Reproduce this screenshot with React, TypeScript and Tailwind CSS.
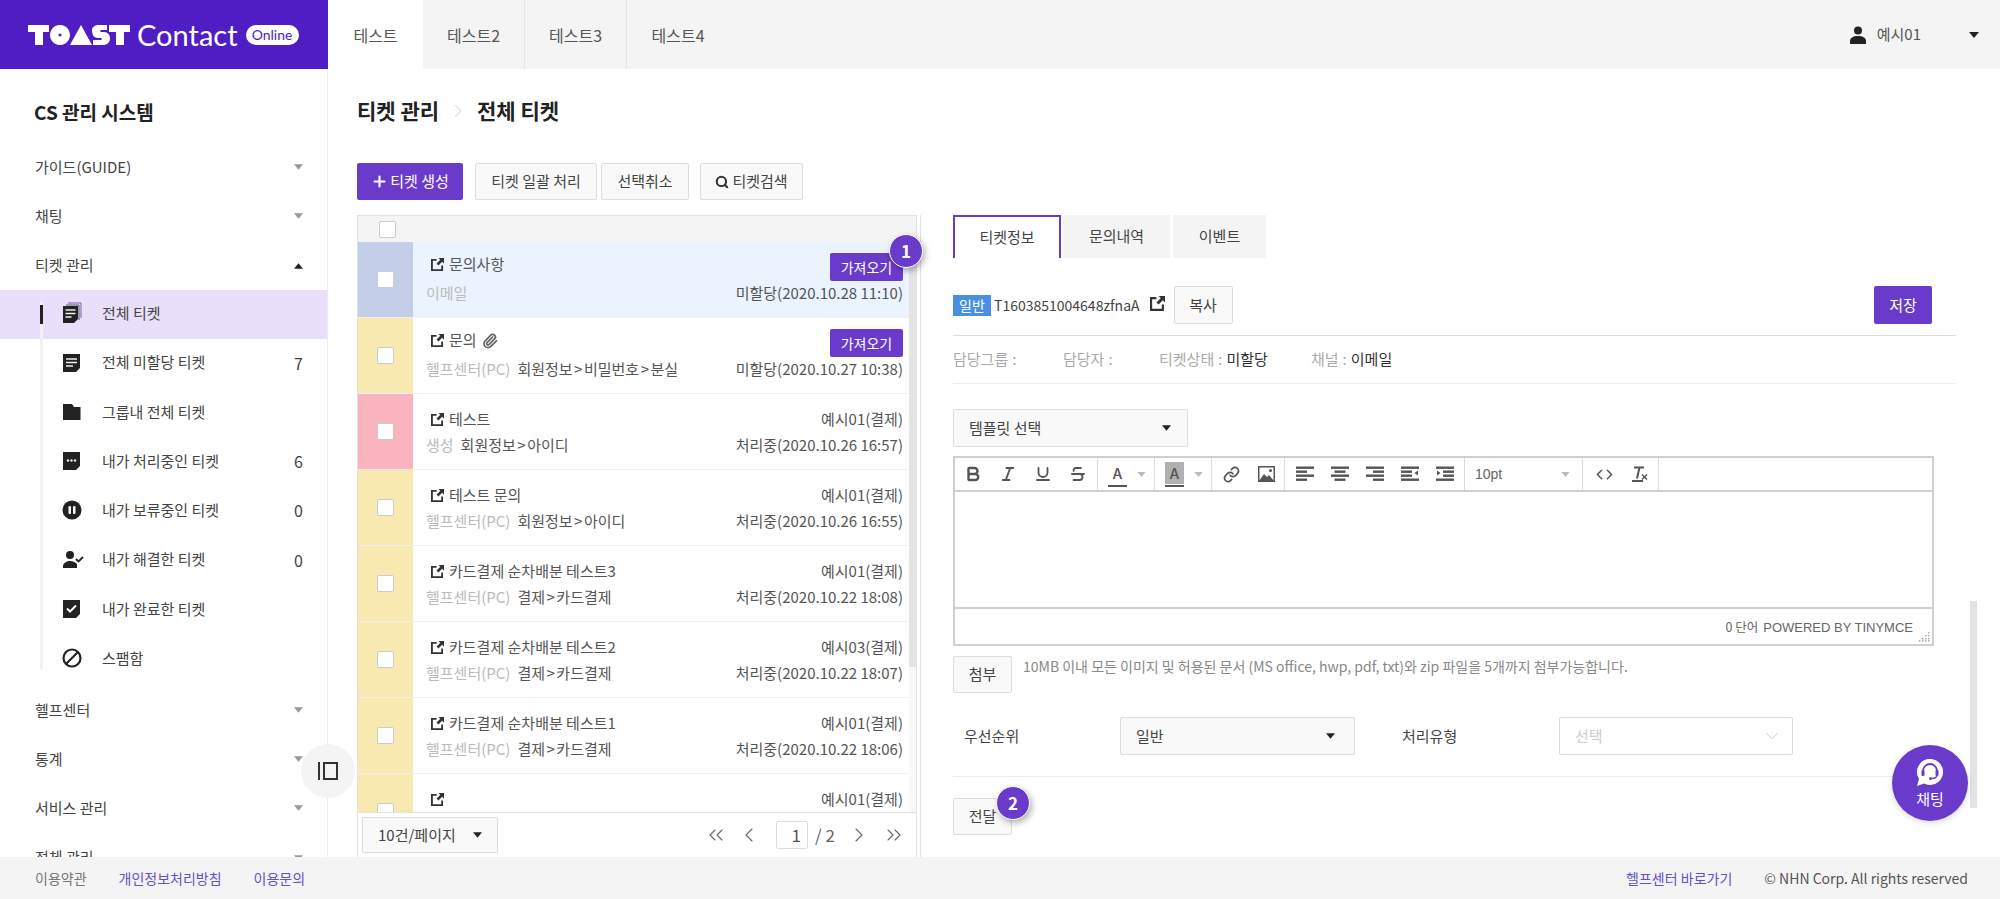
import { ReactNode } from "react";
import {
  Bold,
  Italic,
  Underline,
  Strikethrough,
  Link,
  Code,
  Plus,
  Search,
  Paperclip,
  ChevronRight,
  ChevronLeft,
  ChevronsLeft,
  ChevronsRight,
  ChevronDown,
} from "lucide-react";

function Caret({ up, color = "#222", size = "w-[10px] h-[6px]" }: { up?: boolean; color?: string; size?: string }) {
  return (
    <svg className={`${size} shrink-0`} viewBox="0 0 10 6">
      <path d={up ? "M5 0l5 6H0z" : "M0 0h10L5 6z"} fill={color} />
    </svg>
  );
}

function ExternalIcon({ className = "w-[14px] h-[14px]" }: { className?: string }) {
  return (
    <svg className={`${className} shrink-0`} viewBox="0 0 14 14" fill="#333">
      <path d="M0 1h6v2H2v9h9V8h2v6H0z" />
      <path d="M8 0h6v6l-2-2-4 4-2-2 4-4z" />
    </svg>
  );
}

function Logo() {
  return (
    <svg className="h-[20px] w-[102px] shrink-0" viewBox="0 0 102 20" fill="#fff">
      <path d="M0 0h21v7h-6v13H7V7H0z" />
      <path d="M32 0a10 10 0 1 1-.01 0zM32 8.4a1.6 1.6 0 1 0 .01 0z" fillRule="evenodd" />
      <path d="M53 0l11 20H42z" />
      <path d="M64 5c0-3 3-5 7-5h8v5h-6c-1 0-1 2 0 2h3c4 0 6 3 6 6.5 0 4-3 6.500-7 6.500H65v-5h8c1 0 1-2 0-2h-3c-4 0-6-3-6-8z" />
      <path d="M81 0h21v7h-6v13h-8V7h-7z" />
    </svg>
  );
}

function MenuIcon({ type }: { type: string }) {
  const dark = "#222";
  if (type === "stack")
    return (
      <svg className="h-[22px] w-[20px]" viewBox="0 0 20 22">
        <path d="M6 1h13v15" fill="none" stroke="#7b5bb0" strokeWidth="1" />
        <path d="M4 3h13v15" fill="none" stroke="#555" strokeWidth="1" />
        <path d="M1 4h15v13l-4 4H1z" fill={dark} />
        <path d="M3.500 8h10M3.500 11.500h10M3.500 15h6" stroke="#eee" strokeWidth="1.400" />
      </svg>
    );
  if (type === "doc")
    return (
      <svg className="h-[20px] w-[20px]" viewBox="0 0 20 20">
        <path d="M1 1h17v14l-4 4H1z" fill={dark} />
        <path d="M4 6h11M4 9.500h11M4 13h7" stroke="#eee" strokeWidth="1.500" />
      </svg>
    );
  if (type === "folder")
    return (
      <svg className="h-[20px] w-[20px]" viewBox="0 0 20 20">
        <path d="M1 2h9l2 3h6.500v13H1z" fill={dark} />
      </svg>
    );
  if (type === "chat")
    return (
      <svg className="h-[20px] w-[20px]" viewBox="0 0 20 20">
        <path d="M1 1h17v14l-4 4H1z" fill={dark} />
        <circle cx="6" cy="9.500" r="1.200" fill="#eee" />
        <circle cx="9.500" cy="9.500" r="1.200" fill="#eee" />
        <circle cx="13" cy="9.500" r="1.200" fill="#eee" />
      </svg>
    );
  if (type === "pause")
    return (
      <svg className="h-[20px] w-[20px]" viewBox="0 0 20 20">
        <circle cx="10" cy="10" r="9.500" fill={dark} />
        <rect x="6.500" y="6" width="2.500" height="8" rx="1" fill="#fff" />
        <rect x="11" y="6" width="2.500" height="8" rx="1" fill="#fff" />
      </svg>
    );
  if (type === "person")
    return (
      <svg className="h-[20px] w-[22px]" viewBox="0 0 22 20" fill={dark}>
        <circle cx="8" cy="5" r="4" />
        <path d="M1 18v-2c0-3 4-5 7-5s6 1.500 7 3v4z" />
        <path d="M14 9l2.500 2.500L21 7" fill="none" stroke={dark} strokeWidth="1.800" />
      </svg>
    );
  if (type === "check")
    return (
      <svg className="h-[20px] w-[20px]" viewBox="0 0 20 20">
        <path d="M1 1h17v14l-4 4H1z" fill={dark} />
        <path d="M5 9.500l3 3 6-6" fill="none" stroke="#fff" strokeWidth="2" />
      </svg>
    );
  return (
    <svg className="h-[20px] w-[20px]" viewBox="0 0 20 20">
      <circle cx="10" cy="10" r="8.500" fill="none" stroke={dark} strokeWidth="2.200" />
      <path d="M4 16L16 4" stroke={dark} strokeWidth="2.200" />
    </svg>
  );
}

function TopMenu({ label, up }: { label: string; up?: boolean }) {
  return (
    <div className="flex h-[49.25px] shrink-0 items-center justify-between pl-[35px] pr-[24px] pt-[1px] text-[15px] text-[#444]">
      <span>{label}</span>
      <Caret up={up} color={up ? "#222" : "#999"} size="w-[9px] h-[6px]" />
    </div>
  );
}

const subMenus = [
  { label: "전체 티켓", icon: "stack", active: true },
  { label: "전체 미할당 티켓", icon: "doc", count: "7" },
  { label: "그룹내 전체 티켓", icon: "folder" },
  { label: "내가 처리중인 티켓", icon: "chat", count: "6" },
  { label: "내가 보류중인 티켓", icon: "pause", count: "0" },
  { label: "내가 해결한 티켓", icon: "person", count: "0" },
  { label: "내가 완료한 티켓", icon: "check" },
  { label: "스팸함", icon: "ban" },
];

function Sidebar() {
  return (
    <aside className="flex w-[328px] shrink-0 flex-col overflow-hidden border-r border-[#ececec] bg-white">
      <div className="flex h-[73px] shrink-0 items-center pl-[34px] pt-[13px] text-[19px] font-bold text-[#222]">
        CS 관리 시스템
      </div>
      <TopMenu label="가이드(GUIDE)" />
      <TopMenu label="채팅" />
      <TopMenu label="티켓 관리" up />
      <div className="relative shrink-0">
        <div className="absolute left-[40px] top-[11px] h-[368px] w-[3px] bg-[#f2f2f2]" />
        <div className="absolute left-[40px] top-[15px] z-10 h-[19px] w-[3px] bg-[#222]" />
        {subMenus.map((m) => (
          <div
            key={m.label}
            className={`flex h-[49.25px] items-center pb-[2px] pl-[62px] pr-[24px] text-[15px] text-[#444] ${
              m.active ? "bg-[#e9dffb]" : ""
            }`}
          >
            <span className="flex w-[40px] shrink-0 items-center">
              <MenuIcon type={m.icon} />
            </span>
            <span className="flex-1">{m.label}</span>
            {m.count && <span className="text-[16px]">{m.count}</span>}
          </div>
        ))}
      </div>
      <div className="h-[1px] shrink-0" />
      <TopMenu label="헬프센터" />
      <TopMenu label="통계" />
      <TopMenu label="서비스 관리" />
      <TopMenu label="전체 관리" />
    </aside>
  );
}

const tickets = [
  { title: "문의사항", strip: "bg-[#c5cee8]", bg: "bg-[#ebf3fe]", src: "이메일", path: "", top: "", date: "미할당(2020.10.28 11:10)" },
  { title: "문의", clip: true, strip: "bg-[#f7e9b0]", bg: "bg-white", src: "헬프센터(PC)", path: "회원정보>비밀번호>분실", top: "", date: "미할당(2020.10.27 10:38)" },
  { title: "테스트", strip: "bg-[#f9b4c0]", bg: "bg-white", src: "생성", path: "회원정보>아이디", top: "예시01(결제)", date: "처리중(2020.10.26 16:57)" },
  { title: "테스트 문의", strip: "bg-[#f7e9b0]", bg: "bg-white", src: "헬프센터(PC)", path: "회원정보>아이디", top: "예시01(결제)", date: "처리중(2020.10.26 16:55)" },
  { title: "카드결제 순차배분 테스트3", strip: "bg-[#f7e9b0]", bg: "bg-white", src: "헬프센터(PC)", path: "결제>카드결제", top: "예시01(결제)", date: "처리중(2020.10.22 18:08)" },
  { title: "카드결제 순차배분 테스트2", strip: "bg-[#f7e9b0]", bg: "bg-white", src: "헬프센터(PC)", path: "결제>카드결제", top: "예시03(결제)", date: "처리중(2020.10.22 18:07)" },
  { title: "카드결제 순차배분 테스트1", strip: "bg-[#f7e9b0]", bg: "bg-white", src: "헬프센터(PC)", path: "결제>카드결제", top: "예시01(결제)", date: "처리중(2020.10.22 18:06)" },
  { title: "", strip: "bg-[#f7e9b0]", bg: "bg-white", src: "", path: "", top: "예시01(결제)", date: "" },
];

function Checkbox() {
  return <span className="block h-[17px] w-[17px] rounded-[2px] border border-[#ccc] bg-white" />;
}

function PathText({ path }: { path: string }) {
  const parts = path.split(">");
  return (
    <span className="ml-[7px] text-[#555]">
      {parts.map((p, i) => (
        <span key={i}>
          {i > 0 && <span className="px-[1.5px]">&gt;</span>}
          {p}
        </span>
      ))}
    </span>
  );
}

function TicketRow({ t }: { t: (typeof tickets)[number] }) {
  return (
    <div className={`flex h-[76px] shrink-0 border-b border-[#f0f0f0] ${t.bg}`}>
      <div className={`flex w-[55px] shrink-0 items-center justify-center ${t.strip}`}>
        <Checkbox />
      </div>
      <div className="flex min-w-0 flex-1 flex-col pl-[13px] pr-[6px] pt-[11px] text-[15px]">
        <div className="flex h-[28px] items-center justify-between">
          <div className={`flex items-center pl-[5px] text-[#555] ${t.top ? "" : "pb-[5px]"}`}>
            <ExternalIcon className="mr-[5px] h-[13px] w-[13px]" />
            <span>{t.title}</span>
            {t.clip && <Paperclip className="ml-[5px] h-[16px] w-[16px] text-[#666]" strokeWidth={2.6} />}
          </div>
          {t.top ? (
            <span className="text-[#555]">{t.top}</span>
          ) : (
            <button className="flex h-[28px] w-[73px] items-center justify-center rounded-[2px] bg-[#6a3bcb] text-[14px] text-white">
              가져오기
            </button>
          )}
        </div>
        <div className="mt-[2px] flex h-[20px] items-center justify-between">
          <div>
            <span className="text-[#bbb]">{t.src}</span>
            <PathText path={t.path} />
          </div>
          <span className="text-[#555]">{t.date}</span>
        </div>
      </div>
    </div>
  );
}

function TicketList() {
  return (
    <div className="flex w-[564px] shrink-0">
      <div className="flex w-[560px] shrink-0 flex-col border-l border-r border-t border-[#e2e2e2]">
        <div className="flex h-[26px] shrink-0 items-center bg-[#f4f4f4] pl-[21px]">
          <Checkbox />
        </div>
        <div className="flex min-h-0 flex-1">
          <div className="flex w-[551px] shrink-0 flex-col overflow-hidden">
            {tickets.map((t, i) => (
              <TicketRow key={i} t={t} />
            ))}
          </div>
          <div className="w-[7px] shrink-0 bg-[#f8f8f8]">
            <div className="h-[425px] bg-[#e4e4e4]" />
          </div>
        </div>
        <div className="flex h-[45px] shrink-0 items-center border-t border-[#e2e2e2] pl-[4px] pr-[10px]">
          <div className="flex h-[36px] w-[136px] items-center justify-between rounded-[2px] border border-[#ddd] bg-[#f9f9f9] pl-[15px] pr-[15px] text-[15px] text-[#444]">
            <span>10건/페이지</span>
            <Caret size="w-[9px] h-[6px]" />
          </div>
          <div className="ml-auto flex items-center text-[#666]">
            <ChevronsLeft className="h-[24px] w-[24px]" strokeWidth={1.1} />
            <ChevronLeft className="ml-[9px] h-[24px] w-[24px]" strokeWidth={1.1} />
            <span className="ml-[15px] flex h-[28px] w-[32px] items-center justify-end rounded-[2px] border border-[#ddd] pr-[6px] text-[17px] text-[#555]">
              1
            </span>
            <span className="ml-[7px] w-[18px] whitespace-nowrap text-[17px]">/ 2</span>
            <ChevronRight className="ml-[14px] h-[24px] w-[24px]" strokeWidth={1.1} />
            <ChevronsRight className="ml-[11px] h-[24px] w-[24px]" strokeWidth={1.1} />
          </div>
        </div>
      </div>
      <div className="w-[4px] shrink-0 border-r border-[#e2e2e2]" />
    </div>
  );
}

function GrayButton({ children, className = "" }: { children: ReactNode; className?: string }) {
  return (
    <button
      className={`flex items-center justify-center rounded-[2px] border border-[#ddd] bg-[#f9f9f9] text-[15px] text-[#444] ${className}`}
    >
      {children}
    </button>
  );
}

function ToolGroup({ width, children }: { width: string; children: ReactNode }) {
  return <div className={`flex h-full shrink-0 items-center border-r border-[#ddd] ${width}`}>{children}</div>;
}

function Tool({ children }: { children: ReactNode }) {
  return <span className="flex w-[35px] shrink-0 items-center justify-center text-[#555]">{children}</span>;
}

function AlignIcon({ rows, children }: { rows: [number, number][]; children?: ReactNode }) {
  return (
    <svg className="h-[16px] w-[18px]" viewBox="0 0 18 16" fill="#555">
      {rows.map(([x, w], i) => (
        <rect key={i} x={x} y={0.5 + i * 4} width={w} height="2.400" />
      ))}
      {children}
    </svg>
  );
}

function ColorA({ bg }: { bg?: boolean }) {
  return (
    <span className="flex w-[19px] flex-col items-center">
      <span className={`flex h-[22px] w-[19px] items-center justify-center text-[15px] font-medium leading-none text-[#555] ${bg ? "bg-[#b0b0b0]" : ""}`}>
        A
      </span>
      <span className="mt-[1px] h-[2px] w-[19px] bg-[#555]" />
    </span>
  );
}

function EditorToolbar() {
  return (
    <div className="flex h-[34px] shrink-0 items-center border-b-2 border-[#d0d0d0]">
      <ToolGroup width="w-[143px]">
        <Tool><Bold className="h-[18px] w-[18px]" strokeWidth={3.2} /></Tool>
        <Tool><Italic className="h-[18px] w-[18px]" strokeWidth={2.6} /></Tool>
        <Tool><Underline className="h-[18px] w-[18px]" strokeWidth={2.4} /></Tool>
        <Tool><Strikethrough className="h-[18px] w-[18px]" strokeWidth={2.4} /></Tool>
      </ToolGroup>
      <ToolGroup width="w-[57px] pl-[10px]">
        <ColorA />
        <span className="ml-[10px]"><Caret color="#bbb" size="w-[9px] h-[5px]" /></span>
      </ToolGroup>
      <ToolGroup width="w-[57px] pl-[10px]">
        <ColorA bg />
        <span className="ml-[10px]"><Caret color="#bbb" size="w-[9px] h-[5px]" /></span>
      </ToolGroup>
      <ToolGroup width="w-[73px] pl-[2px]">
        <Tool><Link className="h-[17px] w-[17px]" strokeWidth={2.4} /></Tool>
        <Tool>
          <svg className="h-[16px] w-[17px]" viewBox="0 0 17 16">
            <rect x="0.750" y="0.750" width="15.500" height="14.500" fill="none" stroke="#555" strokeWidth="1.500" />
            <path d="M1 15l5-7 3 3 2-2 5 6z" fill="#555" />
            <circle cx="12.500" cy="4.500" r="1.500" fill="#555" />
          </svg>
        </Tool>
      </ToolGroup>
      <ToolGroup width="w-[180px] pl-[2px]">
        <Tool><AlignIcon rows={[[0, 18], [0, 11], [0, 18], [0, 11]]} /></Tool>
        <Tool><AlignIcon rows={[[0, 18], [3.5, 11], [0, 18], [3.5, 11]]} /></Tool>
        <Tool><AlignIcon rows={[[0, 18], [7, 11], [0, 18], [7, 11]]} /></Tool>
        <Tool>
          <AlignIcon rows={[[0, 18], [0, 11], [0, 11], [0, 18]]}>
            <path d="M17 4.500v5l-3.500-2.500z" />
          </AlignIcon>
        </Tool>
        <Tool>
          <AlignIcon rows={[[0, 18], [7, 11], [7, 11], [0, 18]]}>
            <path d="M1 4.500v5l3.500-2.500z" />
          </AlignIcon>
        </Tool>
      </ToolGroup>
      <ToolGroup width="w-[118px] justify-between pl-[10px] pr-[12px]">
        <span className="font-['Liberation_Sans',sans-serif] text-[14px] text-[#666]">10pt</span>
        <Caret color="#bbb" size="w-[9px] h-[5px]" />
      </ToolGroup>
      <ToolGroup width="w-[76px] pl-[4px]">
        <Tool><Code className="h-[17px] w-[17px]" strokeWidth={2.2} /></Tool>
        <Tool>
          <svg className="h-[18px] w-[18px]" viewBox="0 0 18 18" fill="none" stroke="#555">
            <path d="M3 2.500h10M8.500 2.500L6 13.500M1 16h11" strokeWidth="2" />
            <path d="M11 9.500l5 5M16 9.500l-5 5" strokeWidth="1.500" />
          </svg>
        </Tool>
      </ToolGroup>
    </div>
  );
}

function Editor() {
  return (
    <div className="mt-[9px] flex h-[190px] w-[981px] flex-col border-2 border-[#d0d0d0]">
      <EditorToolbar />
      <div className="flex-1 border-b-2 border-[#d0d0d0]" />
      <div className="relative flex h-[35px] shrink-0 items-center justify-end pr-[19px] pt-[2px] text-[12.500px] text-[#666]">
        <span>0 단어</span>
        <span className="ml-[5px] font-['Liberation_Sans',sans-serif] text-[13px]">POWERED BY TINYMCE</span>
        <svg className="absolute bottom-[2px] right-[2px] h-[11px] w-[11px]" viewBox="0 0 11 11" fill="#aaa">
          {[[9, 1], [9, 4], [6, 4], [9, 7], [6, 7], [3, 7], [9, 9], [6, 9], [3, 9], [0, 9]].map(([x, y]) => (
            <rect key={`${x}-${y}`} x={x} y={y} width="1.500" height="1.500" />
          ))}
        </svg>
      </div>
    </div>
  );
}

function StepBadge({ n, className }: { n: string; className: string }) {
  return (
    <span
      className={`absolute z-20 flex h-[34px] w-[34px] items-center justify-center rounded-full border border-white bg-[#6a3bcb] text-[17px] font-bold text-white shadow-[2px_3px_6px_rgba(0,0,0,0.3)] ${className}`}
    >
      {n}
    </span>
  );
}

function Colon() {
  return <span className="ml-[4px] mr-[4px]">:</span>;
}

function DetailPane() {
  return (
    <div className="relative ml-[32px] w-[1003px] shrink-0">
      <div className="flex gap-[2px] text-[15px] text-[#444]">
        <div className="flex h-[43px] w-[108px] items-center justify-center border-l-2 border-r-2 border-t-2 border-[#6a3bcb] bg-white">티켓정보</div>
        <div className="flex h-[43px] w-[107px] items-center justify-center bg-[#f4f4f4]">문의내역</div>
        <div className="ml-[1px] flex h-[43px] w-[93px] items-center justify-center bg-[#f4f4f4]">이벤트</div>
      </div>

      <div className="mt-[28px] flex items-center border-b border-[#ddd] pb-[11px]">
        <span className="flex h-[21px] w-[38px] items-center justify-center bg-[#4a90e2] text-[14px] text-white">일반</span>
        <span className="ml-[3px] text-[14px] text-[#444]">T1603851004648zfnaA</span>
        <ExternalIcon className="ml-[10px] mb-[4px] h-[15px] w-[15px]" />
        <GrayButton className="ml-[9px] h-[38px] w-[59px]">복사</GrayButton>
        <button className="ml-auto mr-[24px] flex h-[38px] w-[58px] items-center justify-center rounded-[2px] bg-[#6a3bcb] text-[15px] text-white">
          저장
        </button>
      </div>

      <div className="flex h-[48px] items-center border-b border-[#eee] text-[15px] text-[#aaa]">
        <span className="w-[110px]">담당그룹<Colon /></span>
        <span className="w-[96px]">담당자<Colon /></span>
        <span className="w-[152px]">
          티켓상태<Colon /><span className="text-[#333]">미할당</span>
        </span>
        <span>
          채널<Colon /><span className="text-[#333]">이메일</span>
        </span>
      </div>

      <div className="mt-[25px] flex h-[38px] w-[235px] items-center justify-between rounded-[2px] border border-[#ddd] bg-[#f9f9f9] pl-[15px] pr-[16px] text-[15px] text-[#444]">
        <span>템플릿 선택</span>
        <Caret size="w-[9px] h-[6px]" />
      </div>

      <Editor />

      <div className="mt-[10px] flex h-[37px] items-start">
        <GrayButton className="h-[37px] w-[59px]">첨부</GrayButton>
        <span className="ml-[11px] text-[14px] text-[#888]">
          10MB 이내 모든 이미지 및 허용된 문서 (MS office, hwp, pdf, txt)와 zip 파일을 5개까지 첨부가능합니다.
        </span>
      </div>

      <div className="mt-[24px] flex h-[38px] items-center text-[15px] text-[#444]">
        <span className="ml-[11px] w-[156px]">우선순위</span>
        <div className="flex h-[38px] w-[235px] items-center justify-between rounded-[2px] border border-[#ddd] bg-[#f9f9f9] pl-[15px] pr-[19px]">
          <span>일반</span>
          <Caret size="w-[9px] h-[6px]" />
        </div>
        <span className="ml-[47px] w-[157px]">처리유형</span>
        <div className="flex h-[38px] w-[234px] items-center justify-between rounded-[2px] border border-[#ddd] bg-white pl-[15px] pr-[9px] text-[#ccc]">
          <span>선택</span>
          <ChevronDown className="h-[22px] w-[22px] text-[#ccc]" strokeWidth={1} />
        </div>
      </div>

      <div className="mt-[21px] border-t border-[#eee]" />

      <GrayButton className="mt-[21px] h-[37px] w-[59px]">전달</GrayButton>

      <StepBadge n="2" className="left-[43px] top-[571px]" />
    </div>
  );
}

function ChatButton() {
  return (
    <button className="absolute left-[1892px] top-[745px] z-20 flex h-[76px] w-[76px] flex-col items-center rounded-full bg-[#6a3bcb] pt-[13px] text-[15px] text-white shadow-[0_2px_6px_rgba(0,0,0,0.15)]">
      <svg className="h-[29px] w-[28px]" viewBox="0 0 28 29">
        <path d="M14 1a13 13 0 1 1-6 24.500L1 28l2-7A13 13 0 0 1 14 1z" fill="#fff" />
        <path d="M7 16v-3a7 7 0 0 1 14 0v3" fill="none" stroke="#6a3bcb" strokeWidth="1.800" />
        <rect x="5.500" y="12" width="3" height="6" rx="1" fill="#6a3bcb" />
        <rect x="19.500" y="12" width="3" height="6" rx="1" fill="#6a3bcb" />
        <path d="M21 18c-1 2-3 2.500-5 2.500" fill="none" stroke="#6a3bcb" strokeWidth="1.400" />
        <circle cx="14.500" cy="20.500" r="1.500" fill="#6a3bcb" />
      </svg>
      <span className="mt-[1px] leading-[22px]">채팅</span>
    </button>
  );
}

export default function App() {
  return (
    <div className="relative flex h-[899px] w-[2000px] flex-col overflow-hidden bg-white font-['Noto_Sans_CJK_KR','Noto_Sans',sans-serif]">
      <header className="flex h-[69px] shrink-0 bg-[#f4f4f4]">
        <div className="flex w-[328px] shrink-0 items-center bg-[#501dc5] pl-[28px]">
          <Logo />
          <span className="ml-[7px] font-['Lato',sans-serif] text-[29px] font-normal leading-none text-white">Contact</span>
          <span className="ml-[8px] flex h-[20px] w-[53px] items-center justify-center rounded-full bg-white font-['Lato',sans-serif] text-[14px] leading-none text-[#501dc5]">
            Online
          </span>
        </div>
        <nav className="flex text-[16px] text-[#555]">
          <div className="flex w-[95px] items-center justify-center bg-white">테스트</div>
          <div className="flex w-[102px] items-center justify-center border-r border-[#e6e6e6]">테스트2</div>
          <div className="flex w-[102px] items-center justify-center border-r border-[#e6e6e6]">테스트3</div>
          <div className="flex w-[102px] items-center justify-center">테스트4</div>
        </nav>
        <div className="ml-auto flex items-center pr-[21px] text-[15px] text-[#555]">
          <svg className="h-[18px] w-[16px]" viewBox="0 0 16 18" fill="#222">
            <circle cx="8" cy="4.500" r="4" />
            <path d="M0 18v-3c0-3 3-5 8-5s8 2 8 5v3z" />
          </svg>
          <span className="ml-[11px]">예시01</span>
          <span className="ml-[48px]"><Caret size="w-[10px] h-[6px]" /></span>
        </div>
      </header>

      <div className="flex min-h-0 flex-1">
        <Sidebar />
        <main className="flex min-w-0 flex-1 flex-col pl-[29px]">
          <div className="flex h-[84px] shrink-0 items-center text-[21px] font-bold text-[#222]">
            <span>티켓 관리</span>
            <ChevronRight className="mx-[8px] h-[22px] w-[22px] text-[#ccc]" strokeWidth={1} />
            <span>전체 티켓</span>
          </div>
          <div className="mt-[10px] flex h-[37px] shrink-0 items-stretch text-[15px]">
            <button className="flex w-[106px] items-center justify-center gap-[2px] rounded-[2px] bg-[#6a3bcb] text-white">
              <Plus className="h-[17px] w-[17px]" strokeWidth={3} />
              티켓 생성
            </button>
            <GrayButton className="ml-[12px] w-[122px]">티켓 일괄 처리</GrayButton>
            <GrayButton className="ml-[4px] w-[88px]">선택취소</GrayButton>
            <GrayButton className="ml-[11px] w-[103px] gap-[3px]">
              <Search className="h-[14px] w-[14px] text-[#333]" strokeWidth={3.5} />
              티켓검색
            </GrayButton>
          </div>
          <div className="mt-[15px] flex min-h-0 flex-1">
            <TicketList />
            <DetailPane />
            <div className="ml-[14px] mt-[386px] h-[207px] w-[7px] shrink-0 bg-[#e3e3e3]" />
          </div>
        </main>
      </div>

      <footer className="flex h-[42px] shrink-0 items-center bg-[#f4f4f4] pl-[35px] pr-[32px] text-[14px]">
        <span className="text-[#777]">이용약관</span>
        <span className="ml-[32px] text-[#6a4fc9]">개인정보처리방침</span>
        <span className="ml-[32px] text-[#6a4fc9]">이용문의</span>
        <span className="ml-auto text-[#6a4fc9]">헬프센터 바로가기</span>
        <span className="ml-[32px] text-[#555]">© NHN Corp. All rights reserved</span>
      </footer>

      <button className="absolute left-[301px] top-[744px] z-20 flex h-[54px] w-[54px] items-center justify-center rounded-full bg-[#f4f4f4]">
        <svg className="h-[18px] w-[20px]" viewBox="0 0 20 18" fill="none" stroke="#333" strokeWidth="2">
          <path d="M1 0v18" />
          <rect x="6" y="1" width="13" height="16" />
        </svg>
      </button>
      <StepBadge n="1" className="left-[889px] top-[234px]" />
      <ChatButton />
    </div>
  );
}
